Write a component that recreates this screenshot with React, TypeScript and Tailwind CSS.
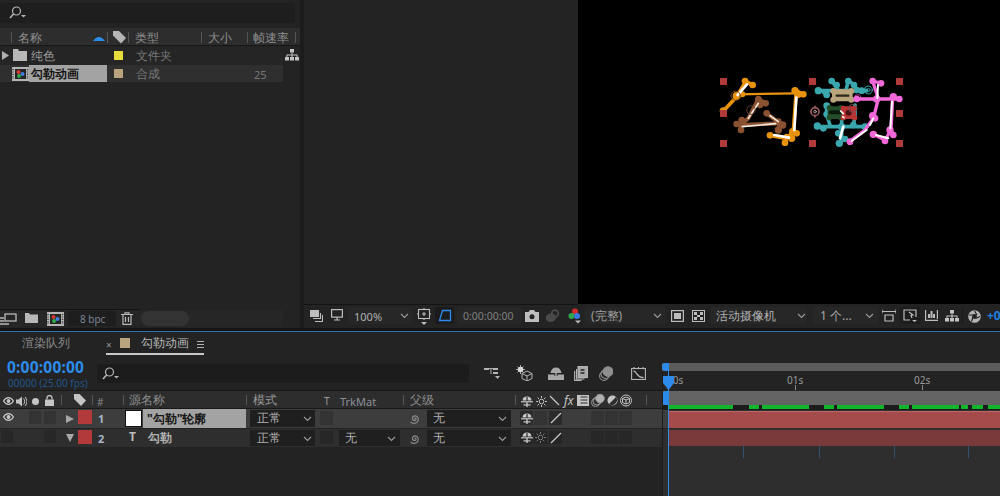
import React from "react";

const Chev = ({ c }: { c: string }) => (
  <svg className={"absolute " + c} width="9" height="6" viewBox="0 0 9 6" fill="none" stroke="#9a9a9a" strokeWidth="1.1"><path d="M1 1l3.5 3.5L8 1" /></svg>
);
const Search = ({ c }: { c: string }) => (
  <svg className={"absolute " + c} width="18" height="14" viewBox="0 0 18 14" fill="none" stroke="#b5b5b5" strokeWidth="1.2"><circle cx="7.500" cy="5" r="4" /><path d="M4.600 8L1 12" strokeWidth="1.600" /><path d="M12 9h5l-2.500 2.400z" fill="#b5b5b5" stroke="none" /></svg>
);
const Spiral = ({ c }: { c: string }) => (
  <svg className={"absolute " + c} width="13" height="13" viewBox="0 0 13 13" fill="none" stroke="#8c8c8c" strokeWidth="1.2"><path d="M6.5 6.5c1-.8 2 .3 1.3 1.3-1 1.2-3.4.6-3.4-1.3 0-2.3 2.4-3.3 4.2-2.3 2 1.2 2.2 4.3.6 5.900-1.800 1.800-5 1.700-6.600-.3" /></svg>
);
const Shy = ({ c }: { c: string }) => (
  <svg className={"absolute " + c} width="12" height="11" viewBox="0 0 12 11" fill="#c8c8c8"><path d="M1.500 4.500C1.500 2 3.500.5 6 .5s4.500 1.500 4.500 4z" /><rect x="0" y="5.200" width="12" height="1.200" /><rect x="5.400" y="1" width="1.200" height="10" fill="#2d2d2d" /><rect x="5.300" y="5" width="1.400" height="6" /><rect x="2.500" y="8.300" width="7" height="1.200" /></svg>
);
const Slash = ({ c }: { c: string }) => (
  <svg className={"absolute " + c} width="12" height="12" viewBox="0 0 12 12" stroke="#c8c8c8" strokeWidth="1.2"><path d="M1 11L11 1" /></svg>
);
const Sun = ({ c, col }: { c: string; col: string }) => (
  <svg className={"absolute " + c} width="11" height="11" viewBox="0 0 11 11" stroke={col} strokeWidth="1" fill="none"><circle cx="5.500" cy="5.500" r="2.300" /><path d="M5.500 0v2M5.500 9v2M0 5.500h2M9 5.500h2M1.600 1.600l1.400 1.400M8 8l1.400 1.400M1.600 9.400L3 8M8 3l1.400-1.400" /></svg>
);
const Eye = ({ c }: { c: string }) => (
  <svg className={"absolute " + c} width="11" height="8" viewBox="0 0 11 8" fill="none" stroke="#c8c8c8" strokeWidth="1.200"><path d="M.6 4C2 1.500 3.800.7 5.500.7S9 1.500 10.400 4C9 6.500 7.200 7.300 5.500 7.300S2 6.500.6 4z" /><circle cx="5.500" cy="4" r="1.300" fill="#c8c8c8" /></svg>
);
const Flow = ({ c }: { c: string }) => (
  <svg className={"absolute " + c} width="14" height="12" viewBox="0 0 14 12" fill="#c4c4c4"><rect x="5" y="0" width="4" height="3.500" /><rect x="0" y="8" width="4" height="3.500" /><rect x="5" y="8" width="4" height="3.500" /><rect x="10" y="8" width="4" height="3.500" /><path d="M6.500 3.500h1V5.500H12.500V8h-1V6.500H7.500V8h-1V6.500H2.500V8h-1V5.500h5z" /></svg>
);
const CompIcon = ({ c }: { c: string }) => (
  <svg className={"absolute " + c} width="17" height="14" viewBox="0 0 17 14">
    <rect width="17" height="14" fill="#b5b5b5" />
    <rect x="3" y="2" width="11" height="10" fill="#242424" />
    <path d="M1 2v10M15.500 2v10" stroke="#444" strokeWidth="1.500" strokeDasharray="1.200 1.200" />
    <circle cx="6.500" cy="5" r="2" fill="#d73434" />
    <circle cx="10.500" cy="7" r="2" fill="#3f7fe0" />
    <circle cx="7" cy="9" r="2" fill="#2fa84a" />
  </svg>
);

const DarkBox = ({ c }: { c: string }) => <div className={"absolute bg-[#272727] " + c} />;

const green = [
  "left-[669px] w-[64px]", "left-[749px] w-[10px]", "left-[762px] w-[47px]", "left-[824px] w-[10px]",
  "left-[837px] w-[47px]", "left-[899px] w-[10px]", "left-[912px] w-[47px]", "left-[961px] w-[7px]",
  "left-[972px] w-[11px]", "left-[988px] w-[12px]",
];

const Dots = ({ pts, fill, r = 9 }: { pts: number[][]; fill: string; r?: number }) => (
  <g fill={fill}>{pts.map((p, i) => <circle key={i} cx={p[0]} cy={p[1]} r={p[2] ?? r} />)}</g>
);

const WordLeft = () => (
  <svg className="absolute left-[715px] top-[75px]" width="100" height="75" viewBox="0 0 300 225" fill="none" strokeLinecap="round" strokeLinejoin="round">
    <path d="M65 58L240 55" stroke="#e8920e" strokeWidth="7" />
    <path d="M25 108L65 65L92 20M90 18L113 30M243 50V60L235 170L215 190L165 181M240 45L265 58M215 188L210 203" stroke="#e8920e" strokeWidth="11" />
    <Dots fill="#e8920e" pts={[[25,108,11],[65,63,12],[90,18,10],[113,30,10],[82,58,9],[240,47,11],[250,58,11],[265,58,10],[233,170,11],[245,175,10],[230,190,11],[210,203,10],[165,181,10],[215,185,9]]} />
    <path d="M68 60L96 28M244 68L238 165M178 180L222 188" stroke="#fff" strokeWidth="8" />
    <circle cx="62" cy="62" r="14" stroke="#7a4a10" strokeWidth="3" />
    <path d="M130 72L100 130L75 150L195 145L155 115M130 72L152 85M75 150L65 147M75 150L78 165M195 145L190 165M195 145L203 150" stroke="#8a5230" strokeWidth="12" />
    <Dots fill="#8a5230" r={10} pts={[[130,72],[152,85],[135,90],[65,147],[80,135],[78,165],[155,115],[190,140],[203,150,11],[190,165,11]]} />
    <path d="M130 85L100 130M82 155L182 146M165 122L190 140" stroke="#f5e8e0" strokeWidth="5" />
    <circle cx="108" cy="105" r="13" stroke="#5c3a28" strokeWidth="3" />
  </svg>
);

const WordRight = () => (
  <svg className="absolute left-[810px] top-[75px]" width="100" height="75" viewBox="0 0 300 225" fill="none" strokeLinecap="round" strokeLinejoin="round">
    {/* anchor */}
    <circle cx="15" cy="110" r="12" stroke="#9a5a5e" strokeWidth="5" />
    <circle cx="15" cy="110" r="4" stroke="#d0a8a8" strokeWidth="2.500" />
    <path d="M0 110H3M15 94V98M15 122V126" stroke="#9a5a5e" strokeWidth="5" />
    {/* teal */}
    <path d="M25 47H170M65 18L85 45M65 18L80 30M115 18L108 45M115 18L135 30M35 47L50 60M50 90V120M135 90V125M22 155H165M50 120L60 150M135 125L130 150M95 130V195M95 195L88 205M95 195L105 192" stroke="#3aa7ae" strokeWidth="11" />
    <Dots fill="#3aa7ae" r={10} pts={[[25,47,11],[65,18],[80,30],[115,18],[132,30],[50,60],[50,92],[50,118],[22,153,11],[40,160],[165,155],[95,155,11],[88,205,11],[105,192],[85,175],[140,45],[155,47],[130,150]]} />
    <path d="M100 155L90 190" stroke="#fff" strokeWidth="8" />
    <rect x="66" y="43" width="62" height="36" rx="10" fill="#b9a47d" />
    <Dots fill="#b9a47d" r={9} pts={[[70,48],[124,48],[70,74],[124,74]]} />
    <path d="M80 62H115" stroke="#2c2618" strokeWidth="7" />
    <rect x="53" y="94" width="43" height="38" rx="9" fill="#234d28" />
    <path d="M62 112H88" stroke="#0c1a0c" strokeWidth="12" />
    <Dots fill="#234d28" r={8} pts={[[58,98],[92,98],[58,128],[92,128]]} />
    <rect x="96" y="94" width="42" height="38" rx="9" fill="#b83434" />
    <circle cx="116" cy="113" r="9" fill="#4c1010" />
    <Dots fill="#b83434" r={8} pts={[[100,100],[134,100],[100,128],[134,128]]} />
    <path d="M92 108L100 116M98 125L102 128" stroke="#fff" strokeWidth="5" />
    <circle cx="128" cy="100" r="12" stroke="#7c4a52" strokeWidth="3" />
    <circle cx="175" cy="45" r="12" stroke="#3aa7ae" strokeWidth="3" />
    <circle cx="175" cy="45" r="5" stroke="#3aa7ae" strokeWidth="2.500" />
    <path d="M135 62c10-6 18-2 18 6" stroke="#b04aa8" strokeWidth="3" />
    {/* pink */}
    <path d="M188 18L205 72L190 130L165 165L118 200M188 18L215 25M140 72H270M248 68L243 165L225 195L190 178M243 165L250 180" stroke="#f268d8" strokeWidth="10" />
    <Dots fill="#f268d8" r={10} pts={[[188,18],[213,25],[140,72],[200,72,11],[250,65,11],[268,72],[188,122,11],[195,130],[120,200],[190,178,11],[225,198],[240,165,11],[250,180]]} />
    <path d="M204 30L202 70M190 130L180 150M125 198L170 165M246 80L241 160M198 180L235 190" stroke="#fff" strokeWidth="6" />
  </svg>
);

export default function App() {
  return (
    <div className="relative w-[1000px] h-[496px] overflow-hidden bg-[#232323] text-[#8f8f8f] text-[12px] leading-none [font-family:'Liberation_Sans','Noto_Sans_CJK_SC',sans-serif]">
      {/* Project panel */}
      <div className="absolute left-0 top-[3px] w-[295px] h-[20px] rounded-[3px] bg-[#1e1e1e]" />
      <Search c="left-[9px] top-[6px]" />
      <div className="absolute left-0 top-[28px] w-[300px] h-[18px] bg-[#2d2d2d] border-b border-[#181818]" />
      {["left-[11px]", "left-[107px]", "left-[128px]", "left-[201px]", "left-[247px]", "left-[295px]"].map((c) => (
        <div key={c} className={"absolute top-[32px] w-px h-[11px] bg-[#555] " + c} />
      ))}
      <span className="absolute left-[18px] top-[32px]">名称</span>
      <svg className="absolute left-[93px] top-[35px]" width="12" height="6" viewBox="0 0 12 6" fill="#2d8ceb"><path d="M0 6 Q6-2 12 6z" /></svg>
      <svg className="absolute left-[113px] top-[31px]" width="13" height="13" viewBox="0 0 13 13" fill="#b5b5b5"><path d="M0 0h6l7 7-5 5.500-8-8z" /></svg>
      <span className="absolute left-[135px] top-[32px]">类型</span>
      <span className="absolute left-[208px] top-[32px]">大小</span>
      <span className="absolute left-[253px] top-[32px]">帧速率</span>

      <div className="absolute left-0 top-[47px] w-[283px] h-[18px] bg-[#252525]" />
      <svg className="absolute left-[2px] top-[51px]" width="7" height="9" viewBox="0 0 7 9" fill="#b0b0b0"><path d="M0 0l7 4.500L0 9z" /></svg>
      <svg className="absolute left-[13px] top-[49px]" width="14" height="12" viewBox="0 0 14 12" fill="#b8b8b8"><path d="M0 0h5l1 2h8v10H0z" /></svg>
      <span className="absolute left-[31px] top-[50px] text-[#999]">纯色</span>
      <div className="absolute left-[114px] top-[51px] w-[9px] h-[9px] bg-[#e6dc3c]" />
      <span className="absolute left-[136px] top-[50px] text-[#777]">文件夹</span>
      <Flow c="left-[285px] top-[49px]" />

      <div className="absolute left-0 top-[65px] w-[283px] h-[17px] bg-[#2f2f2f]" />
      <CompIcon c="left-[12px] top-[67px]" />
      <div className="absolute left-[29px] top-[65px] w-[78px] h-[17px] bg-[#a3a3a3]" />
      <span className="absolute left-[31px] top-[68px] font-bold text-[#161616]">勾勒动画</span>
      <div className="absolute left-[114px] top-[69px] w-[9px] h-[9px] bg-[#b9a47d]" />
      <span className="absolute left-[136px] top-[68px] text-[#777]">合成</span>
      <span className="absolute left-[254px] top-[69px] text-[11px] text-[#777]">25</span>

      {/* Project footer */}
      <div className="absolute left-0 top-[309px] w-[140px] h-px bg-[#141414]" />
      <div className="absolute left-0 top-[310px] w-[283px] h-[17px] bg-[#262626]" />
      <svg className="absolute left-0 top-[313px]" width="17" height="12" viewBox="0 0 17 12" fill="none" stroke="#b8b8b8" strokeWidth="1.300"><rect x="5" y="1" width="11" height="7" /><path d="M0 5h4M0 8h4M0 11h9" /></svg>
      <svg className="absolute left-[25px] top-[313px]" width="13" height="10" viewBox="0 0 13 10" fill="#b8b8b8"><path d="M0 0h4l1 1.500h8V10H0z" /></svg>
      <CompIcon c="left-[47px] top-[312px]" />
      <div className="absolute left-[68px] top-[311px] w-[48px] h-[15px] rounded-[3px] bg-[#1e1e1e]" />
      <span className="absolute left-[80px] top-[314px] text-[10px] text-[#7a8494]">8 bpc</span>
      <svg className="absolute left-[121px] top-[312px]" width="12" height="13" viewBox="0 0 12 13" fill="none" stroke="#b8b8b8" strokeWidth="1.200"><path d="M0 2.500h12M4 2.500V.8h4v1.700M2 2.500V12.400h8V2.500M4.500 5v5M7.500 5v5" /></svg>
      <div className="absolute left-[141px] top-[311px] w-[48px] h-[15px] rounded-full bg-[#333]" />

      {/* Splitter */}
      <div className="absolute left-[300px] top-0 w-[4px] h-[328px] bg-[#1c1c1c]" />

      {/* Viewer */}
      <div className="absolute left-[304px] top-0 w-[274px] h-[304px] bg-[#232323]" />
      <div className="absolute left-[578px] top-0 w-[422px] h-[304px] bg-black" />
      <WordLeft />
      <WordRight />
      {["left-[720px] top-[78px]", "left-[809px] top-[78px]", "left-[896px] top-[78px]", "left-[720px] top-[110px]", "left-[896px] top-[110px]", "left-[720px] top-[140px]", "left-[809px] top-[140px]", "left-[896px] top-[140px]"].map((c) => (
        <div key={c} className={"absolute w-[7px] h-[7px] bg-[#b13a3a] " + c} />
      ))}

      {/* Comp toolbar */}
      <div className="absolute left-[304px] top-[304px] w-[696px] h-[24px] bg-[#232323]" />
      <div className="absolute left-[304px] top-[304px] w-[274px] h-px bg-[#141414]" />
      <svg className="absolute left-[310px] top-[310px]" width="13" height="12" viewBox="0 0 13 12" fill="none" stroke="#bdbdbd" strokeWidth="1.100"><rect x=".5" y=".5" width="8" height="6" fill="#bdbdbd" /><path d="M10.500 3v5.500H3M12.500 5v6.500H5" /></svg>
      <svg className="absolute left-[331px] top-[309px]" width="12" height="12" viewBox="0 0 12 12" fill="none" stroke="#bdbdbd" strokeWidth="1.200"><rect x=".6" y=".6" width="10.800" height="7.500" /><path d="M6 8v2.500M3 11h6" /></svg>
      <DarkBox c="left-[348px] top-[307px] w-[65px] h-[17px] rounded-[3px]" />
      <span className="absolute left-[354px] top-[311px] text-[11px] text-[#b0b0b0]">100%</span>
      <Chev c="left-[400px] top-[313px]" />
      <svg className="absolute left-[417px] top-[308px]" width="14" height="17" viewBox="0 0 14 17" fill="none" stroke="#bdbdbd" strokeWidth="1.100"><rect x="1.500" y="1.500" width="11" height="9" /><path d="M7 4v4M5 6h4M0 6h1.500M12.500 6H14M7 0v1.500M7 10.500V12" /><path d="M4 14h6l-3 3z" fill="#bdbdbd" stroke="none" /></svg>
      <div className="absolute left-[435px] top-[307px] w-[19px] h-[17px] rounded-[3px] bg-[#1b1b1b]" />
      <svg className="absolute left-[438px] top-[309px]" width="14" height="13" viewBox="0 0 14 13" fill="none" stroke="#2d8ceb" strokeWidth="1.300"><path d="M4.500 1.500H12.500V11.500H1.500z" /></svg>
      <DarkBox c="left-[457px] top-[307px] w-[65px] h-[17px] rounded-[3px]" />
      <span className="absolute left-[463px] top-[311px] text-[10.500px] text-[#808080]">0:00:00:00</span>
      <svg className="absolute left-[525px] top-[310px]" width="14" height="12" viewBox="0 0 14 12" fill="#bdbdbd"><path d="M0 2h3.500L5 0h4l1.500 2H14v10H0z" /><circle cx="7" cy="6.800" r="2.500" fill="#232323" /></svg>
      <svg className="absolute left-[546px] top-[309px]" width="14" height="13" viewBox="0 0 14 13" fill="none" stroke="#4a4a4a" strokeWidth="1.800"><circle cx="9" cy="4.500" r="3.300" /><path d="M0 9c1-2.500 3-3.500 5-3.500s3.500 1 4.500 3c-1 2-2.500 3.500-4.500 3.500S1 11 0 9z" fill="#4a4a4a" /></svg>
      <svg className="absolute left-[568px] top-[308px]" width="14" height="16" viewBox="0 0 14 16"><circle cx="7" cy="3.500" r="3" fill="#d62a2a" /><circle cx="3.500" cy="8" r="3" fill="#2ca64a" /><circle cx="9" cy="8" r="3" fill="#3b78e0" /><path d="M7 12.500h6l-3 3z" fill="#bdbdbd" /></svg>
      <DarkBox c="left-[585px] top-[307px] w-[81px] h-[17px] rounded-[3px]" />
      <span className="absolute left-[591px] top-[310px] text-[#a0a0a0]">(完整)</span>
      <Chev c="left-[653px] top-[313px]" />
      <svg className="absolute left-[671px] top-[310px]" width="13" height="12" viewBox="0 0 13 12" fill="none" stroke="#bdbdbd" strokeWidth="1.200"><rect x=".6" y=".6" width="11.800" height="10.800" /><rect x="3" y="3" width="7" height="6" fill="#bdbdbd" stroke="none" /></svg>
      <svg className="absolute left-[692px] top-[310px]" width="13" height="12" viewBox="0 0 13 12" fill="#bdbdbd"><rect x=".5" y=".5" width="12" height="11" fill="none" stroke="#bdbdbd" /><path d="M2 2h3v3H2zM8 2h3v3H8zM5 5h3v2H5zM2 7h3v3H2zM8 7h3v3H8z" /></svg>
      <DarkBox c="left-[710px] top-[307px] w-[97px] h-[17px] rounded-[3px]" />
      <span className="absolute left-[716px] top-[310px] text-[#b0b0b0]">活动摄像机</span>
      <Chev c="left-[797px] top-[313px]" />
      <DarkBox c="left-[813px] top-[307px] w-[65px] h-[17px] rounded-[3px]" />
      <span className="absolute left-[820px] top-[310px] text-[#a8a8a8]">1 个...</span>
      <Chev c="left-[865px] top-[313px]" />
      <svg className="absolute left-[882px] top-[309px]" width="14" height="13" viewBox="0 0 14 13" fill="none" stroke="#bdbdbd" strokeWidth="1.200"><path d="M0 2.500h14M3 6h8v6H3zM0 .5v4M14 .5v4" /></svg>
      <div className="absolute left-[900px] top-[307px] w-[20px] h-[17px] bg-[#1d1d1d]" />
      <svg className="absolute left-[903px] top-[309px]" width="14" height="13" viewBox="0 0 14 13" fill="none" stroke="#bdbdbd" strokeWidth="1.200"><path d="M13 8V1H1v10h6" /><path d="M6 3l4 3-2 .5L9 9" /><path d="M9 11h5l-2.500 2z" fill="#bdbdbd" stroke="none" /></svg>
      <svg className="absolute left-[925px] top-[310px]" width="13" height="11" viewBox="0 0 13 11" fill="#bdbdbd"><path d="M0 0h1.200v9.800H13V11H0zM11.800 0H13v9h-1.200z" /><rect x="3" y="4" width="2" height="4" /><rect x="5.500" y="1" width="2" height="7" /><rect x="8" y="4" width="2" height="4" /></svg>
      <Flow c="left-[945px] top-[310px]" />
      <div className="absolute left-[962px] top-[307px] w-px h-[17px] bg-[#1a1a1a]" />
      <svg className="absolute left-[968px] top-[310px]" width="13" height="13" viewBox="0 0 13 13" fill="none"><circle cx="6.500" cy="6.500" r="6.300" fill="#b5b5b5" /><circle cx="6.500" cy="6.500" r="2.400" fill="#232323" /><path d="M6.500 1L9 5M12 6.500L7.500 8.500M3.500 11.500L5 7M1 5l4.500 0" stroke="#232323" strokeWidth="1.200" /></svg>
      <span className="absolute left-[987px] top-[310px] text-[12px] font-bold text-[#1f7fe0]">+0</span>

      {/* Separator */}
      <div className="absolute left-0 top-[328px] w-[1000px] h-[3px] bg-[#151515]" />
      <div className="absolute left-0 top-[331px] w-[1000px] h-px bg-[#2e6fae]" />

      {/* Tabs */}
      <span className="absolute left-[22px] top-[337px] text-[#8a8a8a]">渲染队列</span>
      <span className="absolute left-[106px] top-[340px] text-[10px] text-[#999]">×</span>
      <div className="absolute left-[120px] top-[338px] w-[10px] h-[10px] bg-[#b9a47d]" />
      <span className="absolute left-[141px] top-[337px] text-[#b8b8b8]">勾勒动画</span>
      <div className="absolute left-[197px] top-[341px] w-[7px] h-[7px] border-y border-[#b0b0b0] flex items-center"><div className="w-full h-px bg-[#b0b0b0]" /></div>
      <div className="absolute left-[106px] top-[353px] w-[98px] h-[2px] bg-[#c8c8c8]" />

      {/* Time */}
      <span className="absolute left-[7px] top-[360px] text-[15.5px] tracking-[0.2px] font-bold leading-[14px] text-[#2d8ceb]">0:00:00:00</span>
      <span className="absolute left-[8px] top-[378px] text-[10px] leading-[10px] text-[#22558c]">00000 (25.00 fps)</span>
      <div className="absolute left-[97px] top-[364px] w-[372px] h-[19px] rounded-[3px] bg-[#1c1c1c]" />
      <Search c="left-[102px] top-[367px]" />

      {/* Timeline toolbar */}
      <svg className="absolute left-[484px] top-[367px]" width="16" height="13" viewBox="0 0 16 13" fill="#b5b5b5"><rect x="0" y="1" width="5" height="2" /><rect x="9" y="1" width="5" height="2" /><rect x="9" y="5" width="5" height="2" /><path d="M5 1.600h4M7 2v5" stroke="#b5b5b5" /><path d="M11 9h5l-2.500 3z" /></svg>
      <svg className="absolute left-[516px] top-[365px]" width="17" height="16" viewBox="0 0 17 16" fill="none" stroke="#b5b5b5"><path d="M11 6l5 2.500v5L11 16l-5-2.500v-5zM6 8.500l5 2.500 5-2.500M11 11v5" /><circle cx="4.500" cy="4.500" r="2.700" fill="#d5d5d5" stroke="none" /><path d="M4.500 0v9M0 4.500h9M1.500 1.500l6 6M7.500 1.500l-6 6" stroke="#d5d5d5" strokeWidth=".8" /></svg>
      <svg className="absolute left-[548px] top-[367px]" width="16" height="13" viewBox="0 0 16 13" fill="#a8a8a8"><path d="M2.500 6C3 2.500 5 .5 8 .5s5 2 5.500 5.500zM0 7.500h6.500v1.500h3V7.500H16V13H0z" /><rect x="7.300" y="5" width="1.400" height="4" /></svg>
      <svg className="absolute left-[574px] top-[366px]" width="14" height="15" viewBox="0 0 14 15" fill="none" stroke="#b5b5b5" strokeWidth="1.100"><rect x="4" y=".6" width="9.400" height="11" fill="#a8a8a8" /><path d="M6.500 4h4M6.500 7h4" stroke="#232323" strokeWidth="1.400" /><path d="M2.500 3v10h8M.6 5v9.400h7" /></svg>
      <svg className="absolute left-[599px] top-[366px]" width="14" height="15" viewBox="0 0 14 15" fill="none" stroke="#8f8f8f" strokeWidth="1.100"><circle cx="5" cy="10" r="4.400" /><circle cx="6.500" cy="8" r="4.500" /><circle cx="9" cy="5.500" r="4.800" fill="#8f8f8f" /></svg>
      <svg className="absolute left-[631px] top-[367px]" width="15" height="13" viewBox="0 0 15 13" fill="none" stroke="#b5b5b5" strokeWidth="1.100"><rect x=".6" y="1.500" width="13.800" height="11" /><path d="M3 0v1.500M7.500 0v1.500M12 0v1.500" /><path d="M2.500 4c3 0 3.500 6 8.500 6.500h1.500" strokeWidth="1.300" /></svg>

      {/* Timeline headers */}
      <div className="absolute left-0 top-[390px] w-[662px] h-[19px] bg-[#2d2d2d] border-y border-[#181818]" />
      <Eye c="left-[3px] top-[397px]" />
      <svg className="absolute left-[16px] top-[396px]" width="11" height="11" viewBox="0 0 11 11" fill="#c4c4c4"><path d="M0 3.500h2.500L6 .5v10L2.500 7.500H0z" /><path d="M7.500 2.500c1.500 1.500 1.500 4.500 0 6M9 1c2.300 2.400 2.300 6.600 0 9" stroke="#c4c4c4" fill="none" /></svg>
      <div className="absolute left-[32px] top-[398px] w-[7px] h-[7px] rounded-full bg-[#c4c4c4]" />
      <svg className="absolute left-[45px] top-[395px]" width="9" height="11" viewBox="0 0 9 11" fill="#c4c4c4"><rect x="0" y="4.500" width="9" height="6.500" /><path d="M2 4.500V2.800a2.500 2.300 0 0 1 5 0v1.700" fill="none" stroke="#c4c4c4" strokeWidth="1.300" /></svg>
      <svg className="absolute left-[74px] top-[394px]" width="12" height="12" viewBox="0 0 12 12" fill="#c4c4c4"><path d="M0 0h5.500L12 6.500 7 12 0 5z" /></svg>
      {["left-[61px]", "left-[92px]", "left-[123px]", "left-[246px]", "left-[403px]", "left-[515px]", "left-[646px]"].map((c) => (
        <div key={c} className={"absolute top-[395px] w-px h-[10px] bg-[#555] " + c} />
      ))}
      <span className="absolute left-[97px] top-[397px] text-[10px] text-[#8a8a8a]">#</span>
      <span className="absolute left-[129px] top-[394px] text-[#8f8f8f]">源名称</span>
      <span className="absolute left-[253px] top-[394px] text-[#9a9a9a]">模式</span>
      <span className="absolute left-[324px] top-[396px] text-[10px] text-[#9a9a9a]">T</span>
      <span className="absolute left-[340px] top-[396px] text-[11px] text-[#8a8f98]">TrkMat</span>
      <span className="absolute left-[410px] top-[394px] text-[#8f8f8f]">父级</span>
      <Shy c="left-[521px] top-[396px]" />
      <Sun c="left-[536px] top-[396px]" col="#c4c4c4" />
      <svg className="absolute left-[549px] top-[395px]" width="11" height="11" viewBox="0 0 11 11" stroke="#c4c4c4" strokeWidth="1.200"><path d="M1 1l9 9" /></svg>
      <span className="absolute left-[564px] top-[395px] text-[12px] italic text-[#c4c4c4] [font-family:'Liberation_Serif',serif]">fx</span>
      <svg className="absolute left-[577px] top-[395px]" width="12" height="11" viewBox="0 0 12 11" fill="#c4c4c4"><path d="M0 0h12v11H0z" /><path d="M3.500 2h7M3.500 5h7M3.500 8h7" stroke="#2d2d2d" strokeWidth="1.200" /></svg>
      <svg className="absolute left-[591px] top-[394px]" width="14" height="13" viewBox="0 0 14 13" fill="none" stroke="#999"><circle cx="4.500" cy="8.500" r="4" /><circle cx="6" cy="7" r="4" /><circle cx="9" cy="4.500" r="4.300" fill="#b0b0b0" /></svg>
      <svg className="absolute left-[607px] top-[395px]" width="11" height="11" viewBox="0 0 11 11"><circle cx="5.500" cy="5.500" r="5" fill="#c4c4c4" /><path d="M9 2L2 9a5 5 0 0 0 7-7z" fill="#2d2d2d" /></svg>
      <svg className="absolute left-[620px] top-[394px]" width="12" height="13" viewBox="0 0 12 13" fill="none" stroke="#c4c4c4"><circle cx="6" cy="6.500" r="5.500" /><path d="M2.500 4.500L6 3l3.500 1.500v4L6 10 2.500 8.500zM2.500 4.500L6 6l3.500-1.500M6 6v4" /></svg>

      {/* Layer row 1 */}
      <div className="absolute left-0 top-[409px] w-[668px] h-[19px] bg-[#3d3d3d]" />
      <Eye c="left-[3px] top-[413px]" />
      <DarkBox c="left-[29px] top-[411px] w-[12px] h-[13px] !bg-[#333]" />
      <DarkBox c="left-[44px] top-[411px] w-[12px] h-[13px] !bg-[#333]" />
      <svg className="absolute left-[66px] top-[415px]" width="8" height="8" viewBox="0 0 8 8" fill="#a8a8a8"><path d="M0 0l8 4-8 4z" /></svg>
      <div className="absolute left-[78px] top-[410px] w-[14px] h-[14px] bg-[#b23a3a]" />
      <span className="absolute left-[98px] top-[413px] text-[11px] font-bold text-[#a9b4c4]">1</span>
      <div className="absolute left-[125px] top-[410px] w-[17px] h-[17px] bg-white border border-[#111]" />
      <div className="absolute left-[143px] top-[409px] w-[103px] h-[19px] bg-[#a3a3a3]" />
      <span className="absolute left-[147px] top-[413px] font-bold text-[#181818]">"勾勒"轮廓</span>
      <div className="absolute left-[250px] top-[410px] w-[65px] h-[17px] bg-[#1f1f1f]" />
      <span className="absolute left-[257px] top-[412px] text-[#b0b0b0]">正常</span>
      <Chev c="left-[303px] top-[416px]" />
      <DarkBox c="left-[320px] top-[411px] w-[13px] h-[14px] !bg-[#333]" />
      <Spiral c="left-[408px] top-[412px]" />
      <div className="absolute left-[427px] top-[410px] w-[84px] h-[17px] bg-[#1f1f1f]" />
      <span className="absolute left-[433px] top-[412px] text-[#b0b0b0]">无</span>
      <Chev c="left-[498px] top-[416px]" />
      <div className="absolute left-[520px] top-[411px] w-[13px] h-[14px] bg-[#2b2b2b]" />
      <Shy c="left-[521px] top-[413px]" />
      <div className="absolute left-[534px] top-[411px] w-[13px] h-[14px] bg-[#333]" />
      <div className="absolute left-[549px] top-[411px] w-[13px] h-[14px] bg-[#2b2b2b]" />
      <Slash c="left-[550px] top-[412px]" />
      {["left-[591px]", "left-[605px]", "left-[619px]"].map((c) => (
        <div key={c} className={"absolute top-[411px] w-[13px] h-[14px] bg-[#333] " + c} />
      ))}

      {/* Layer row 2 */}
      <div className="absolute left-0 top-[429px] w-[668px] h-[18px] bg-[#2e2e2e]" />
      <DarkBox c="left-[1px] top-[430px] w-[12px] h-[13px]" />
      <DarkBox c="left-[44px] top-[430px] w-[12px] h-[13px]" />
      <svg className="absolute left-[66px] top-[434px]" width="8" height="8" viewBox="0 0 8 8" fill="#a8a8a8"><path d="M0 0h8L4 8z" /></svg>
      <div className="absolute left-[78px] top-[430px] w-[14px] h-[14px] bg-[#b23a3a]" />
      <span className="absolute left-[98px] top-[433px] text-[11px] font-bold text-[#a9b4c4]">2</span>
      <span className="absolute left-[129px] top-[431px] text-[12px] font-bold text-[#bdbdbd] [font-family:'Liberation_Serif',serif]">T</span>
      <span className="absolute left-[148px] top-[432px] font-bold text-[#b0b0b0]">勾勒</span>
      <div className="absolute left-[250px] top-[430px] w-[65px] h-[16px] bg-[#1f1f1f]" />
      <span className="absolute left-[257px] top-[432px] text-[#b0b0b0]">正常</span>
      <Chev c="left-[303px] top-[436px]" />
      <DarkBox c="left-[320px] top-[431px] w-[13px] h-[13px]" />
      <div className="absolute left-[339px] top-[430px] w-[61px] h-[16px] bg-[#1f1f1f]" />
      <span className="absolute left-[345px] top-[432px] text-[#b0b0b0]">无</span>
      <Chev c="left-[387px] top-[436px]" />
      <Spiral c="left-[408px] top-[432px]" />
      <div className="absolute left-[427px] top-[430px] w-[84px] h-[16px] bg-[#1f1f1f]" />
      <span className="absolute left-[433px] top-[432px] text-[#b0b0b0]">无</span>
      <Chev c="left-[498px] top-[436px]" />
      <div className="absolute left-[520px] top-[431px] w-[13px] h-[13px] bg-[#252525]" />
      <Shy c="left-[521px] top-[432px]" />
      <div className="absolute left-[534px] top-[431px] w-[13px] h-[13px] bg-[#252525]" />
      <Sun c="left-[535px] top-[432px]" col="#7a7a7a" />
      <div className="absolute left-[549px] top-[431px] w-[13px] h-[13px] bg-[#252525]" />
      <Slash c="left-[550px] top-[432px]" />
      {["left-[591px]", "left-[605px]", "left-[619px]"].map((c) => (
        <div key={c} className={"absolute top-[431px] w-[13px] h-[13px] bg-[#272727] " + c} />
      ))}

      {/* Timeline area */}
      <div className="absolute left-[662px] top-[363px] w-[338px] h-[8px] bg-[#5c5c5c]" />
      <div className="absolute left-[662px] top-[363px] w-[6px] h-[8px] rounded-l-full bg-[#2d8ceb]" />
      <span className="absolute left-[667px] top-[375px] text-[10px] text-[#9a9a9a]">00s</span>
      <span className="absolute left-[787px] top-[375px] text-[10px] text-[#9a9a9a]">01s</span>
      <span className="absolute left-[914px] top-[375px] text-[10px] text-[#9a9a9a]">02s</span>
      <div className="absolute left-[795px] top-[385px] w-px h-[5px] bg-[#8a8a8a]" />
      <div className="absolute left-[922px] top-[385px] w-px h-[5px] bg-[#8a8a8a]" />
      <div className="absolute left-[662px] top-[391px] w-[338px] h-[14px] bg-[#646464]" />
      <div className="absolute left-[662px] top-[391px] w-[6px] h-[14px] rounded-l-[4px] bg-[#2d8ceb]" />
      <div className="absolute left-[662px] top-[405px] w-[338px] h-[5px] bg-[#1c1c1c]" />
      {green.map((c) => (
        <div key={c} className={"absolute top-[405px] h-[4px] bg-[#10b52c] " + c} />
      ))}
      <div className="absolute left-[668px] top-[410px] w-[332px] h-[37px] bg-[#2e2e2e]" />
      <div className="absolute left-[668px] top-[411px] w-[332px] h-[17px] bg-[#a64b4b] border-t border-[#bb6a6a]" />
      <div className="absolute left-[668px] top-[430px] w-[332px] h-[16px] bg-[#783a3a]" />
      <div className="absolute left-[662px] top-[447px] w-[338px] h-[49px] bg-[#2e2e2e]" />
      {["left-[743px]", "left-[819px]", "left-[894px]", "left-[968px]"].map((c) => (
        <div key={c} className={"absolute top-[445px] w-px h-[13px] bg-[#34506c] " + c} />
      ))}
      <div className="absolute left-[662px] top-[371px] w-px h-[125px] bg-[#1c1c1c]" />
      <svg className="absolute left-[662px] top-[376px]" width="13" height="15" viewBox="0 0 13 15" fill="#2d8ceb"><path d="M1 0h11v7l-5.500 7L1 7z" /></svg>
      <div className="absolute left-[668px] top-[363px] w-px h-[133px] bg-[#2d8ceb]" />
    </div>
  );
}
